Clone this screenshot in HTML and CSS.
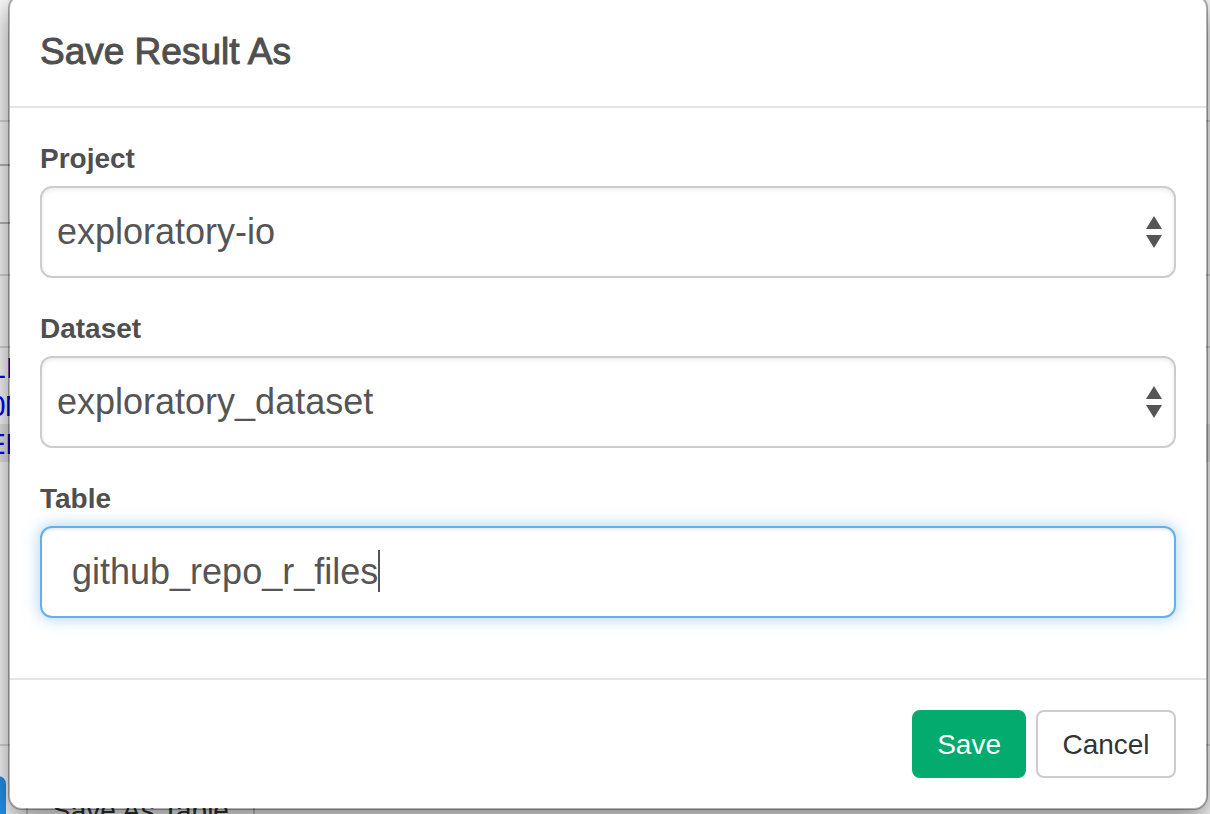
FILE: index.html
```html
<!DOCTYPE html>
<html lang="en">
<head>
<meta charset="utf-8">
<meta name="viewport" content="width=device-width, initial-scale=1">
<title>Save Result As</title>
<link rel="stylesheet" href="styles.css">
</head>
<body>
<div class="page" aria-hidden="true">
  <div class="row row-top"></div>
  <div class="row row-tabs short-line"></div>
  <div class="row row-tools short-line"></div>
  <div class="row row-options"></div>
  <div class="row row-head"></div>
  <div class="row editor">
    <div class="code-line">SELECT</div>
    <div class="code-line">FROM</div>
    <div class="code-line active">WHERE</div>
  </div>
  <div class="page-actions">
    <button class="btn btn-run" type="button" tabindex="-1"></button>
    <button class="btn btn-default" type="button" tabindex="-1">Save As Table</button>
  </div>
</div>

<form class="modal" role="dialog" aria-labelledby="dialog-title">
  <header class="modal-header">
    <h1 class="modal-title" id="dialog-title">Save Result As</h1>
  </header>
  <div class="modal-body">
    <div class="field">
      <label class="label" for="project">Project</label>
      <div class="control-wrap">
        <select class="control" id="project"><option>exploratory-io</option></select>
        <svg class="arrows" viewBox="0 0 16 32" aria-hidden="true"><path d="M8 0L16 13H0zM0 19H16L8 32z"/></svg>
      </div>
    </div>
    <div class="field">
      <label class="label" for="dataset">Dataset</label>
      <div class="control-wrap">
        <select class="control" id="dataset"><option>exploratory_dataset</option></select>
        <svg class="arrows" viewBox="0 0 16 32" aria-hidden="true"><path d="M8 0L16 13H0zM0 19H16L8 32z"/></svg>
      </div>
    </div>
    <div class="field">
      <label class="label" for="table">Table</label>
      <div class="control-wrap">
        <input class="control control-active" id="table" type="text" value="github_repo_r_files">
        <span class="caret"></span>
      </div>
    </div>
  </div>
  <footer class="modal-footer">
    <button class="btn btn-save" type="submit">Save</button>
    <button class="btn btn-default btn-cancel" type="button">Cancel</button>
  </footer>
</form>
</body>
</html>
```

FILE: styles.css
```css
* {
  box-sizing: border-box;
}

body {
  position: relative;
  min-height: 100vh;
  margin: 0;
  overflow: hidden;
  background: #fff;
  color: #4f4f4f;
  font-family: "Liberation Sans", Arial, sans-serif;
}

/* Query page behind the dialog */
.page {
  height: 100vh;
  overflow: hidden;
}

.row {
  border-bottom: 2px solid #ddd;
}

.row-top { height: 122px; }
.row-tabs { height: 44px; }
.row-tools { height: 58px; }
.row-options { height: 52px; }
.row-head { height: 72px; }

.short-line {
  width: 50%;
  border-bottom-color: #bbb;
}

.editor {
  height: 398px;
}

.code-line {
  height: 38px;
  color: #00f;
  font: 26px/42px "DejaVu Sans Mono", monospace;
  text-indent: -41px;
}

.active {
  background: #e8e8e8;
}

.page-actions {
  display: flex;
  gap: 20px;
  margin-top: 30px;
  margin-left: -134px;
}

/* Buttons */
.btn {
  height: 68px;
  padding: 2px 24px 0;
  border: 2px solid #ccc;
  border-radius: 8px;
  background: #fff;
  color: #333;
  font: 28px/32px "Liberation Sans", Arial, sans-serif;
}

.btn-run {
  width: 140px;
  border-color: #2196f3;
  background: #2196f3;
}

.btn-save {
  padding: 2px 23px 0;
  border-color: #03ab6e;
  background: #03ab6e;
  color: #fff;
}

.btn-cancel {
  min-width: 140px;
}

/* Dialog */
.modal {
  position: absolute;
  top: -6px;
  right: 2px;
  left: 8px;
  border: 2px solid rgba(0, 0, 0, 0.3);
  border-radius: 14px;
  background: #fff;
  background-clip: padding-box;
  box-shadow: 0 10px 30px rgba(0, 0, 0, 0.5);
}

.modal-header {
  padding: 34px 30px 32px;
  border-bottom: 2px solid #e5e5e5;
}

.modal-title {
  margin: 0;
  font-size: 37px;
  font-weight: 400;
  line-height: 44px;
  -webkit-text-stroke: 1px #4f4f4f;
}

.modal-body {
  display: grid;
  gap: 30px;
  padding: 30px 30px 60px;
}

.label {
  display: block;
  height: 48px;
  font-size: 28px;
  font-weight: 700;
  line-height: 42px;
}

.control-wrap {
  position: relative;
}

.control {
  display: block;
  width: 100%;
  height: 92px;
  padding: 0 15px;
  border: 2px solid #ccc;
  border-radius: 12px;
  outline: 0;
  appearance: none;
  background: #fff;
  box-shadow: inset 0 2px 4px rgba(0, 0, 0, 0.075);
  color: #555;
  font: 36px/44px "Liberation Sans", Arial, sans-serif;
}

.control-active {
  padding: 0 30px;
  border-color: #66afe9;
  box-shadow: inset 0 2px 2px rgba(0, 0, 0, 0.075), 0 0 16px rgba(102, 175, 233, 0.6);
}

.arrows {
  position: absolute;
  top: 30px;
  right: 14px;
  width: 16px;
  height: 32px;
  fill: #555;
  pointer-events: none;
}

.caret {
  position: absolute;
  top: 24px;
  left: 338px;
  width: 2px;
  height: 42px;
  background: #555;
}

.modal-footer {
  display: flex;
  justify-content: flex-end;
  gap: 10px;
  padding: 30px;
  border-top: 2px solid #e5e5e5;
}
```
